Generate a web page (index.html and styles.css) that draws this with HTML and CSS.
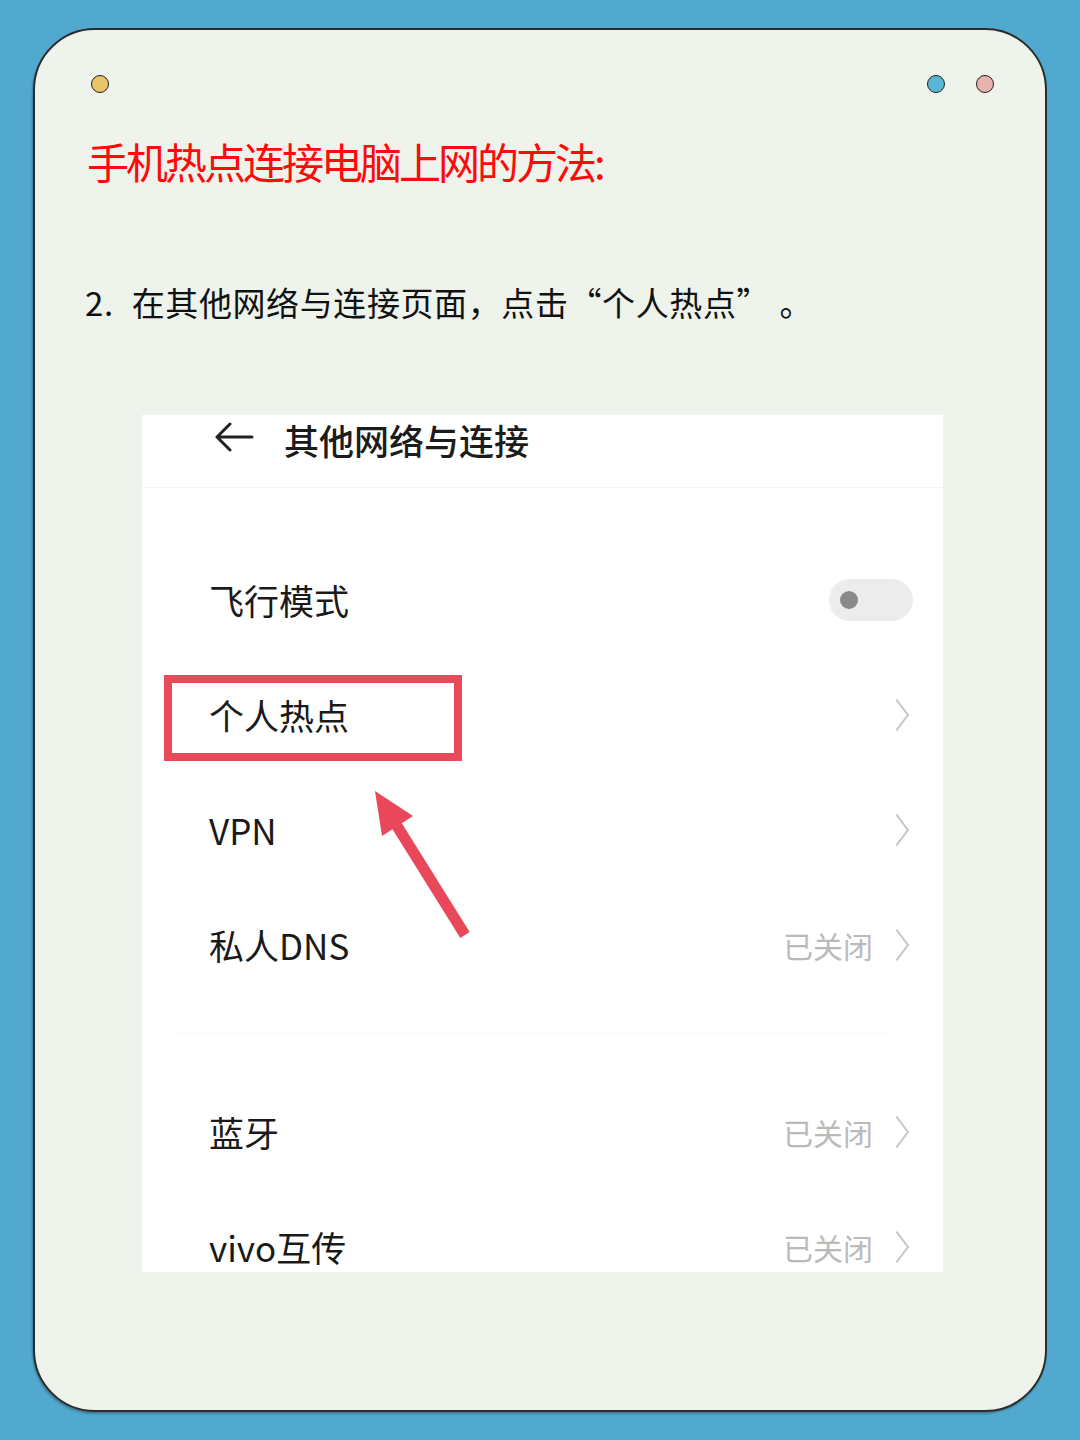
FILE: index.html
```html
<!DOCTYPE html>
<html>
	<head>
		<meta charset="utf-8">
		<title>手机热点连接电脑上网的方法</title>
		<link rel="stylesheet" href="styles.css">
	</head>
	<body>
		<div class="card">
			<div class="dots">
				<span class="dot yellow"></span>
				<span class="dots-right">
					<span class="dot blue"></span>
					<span class="dot pink"></span>
				</span>
			</div>
			<h1 class="title">手机热点连接电脑上网的方法:</h1>
			<p class="step"><span class="num">2.</span>在其他网络与连接页面，点击“个人热点”<span class="end">。</span></p>

			<div class="shot">
				<div class="shot-head">
					<svg class="back" width="40" height="30" viewBox="0 0 40 30">
						<path d="M38 15H3M16 2L3 15l13 13" fill="none" stroke="#222" stroke-width="3" stroke-linecap="round" stroke-linejoin="round"/>
					</svg>
					<span class="shot-title">其他网络与连接</span>
				</div>
				<div class="rows">
					<div class="row">
						<span class="label">飞行模式</span>
						<span class="switch"><i></i></span>
					</div>
					<div class="row">
						<span class="label">个人热点</span>
						<span class="chev"></span>
					</div>
					<div class="row">
						<span class="label">VPN</span>
						<span class="chev"></span>
					</div>
					<div class="row">
						<span class="label">私人DNS</span>
						<span class="right"><span class="state">已关闭</span><span class="chev"></span></span>
					</div>
				</div>
				<div class="sep"></div>
				<div class="rows">
					<div class="row">
						<span class="label">蓝牙</span>
						<span class="right"><span class="state">已关闭</span><span class="chev"></span></span>
					</div>
					<div class="row">
						<span class="label">vivo互传</span>
						<span class="right"><span class="state">已关闭</span><span class="chev"></span></span>
					</div>
				</div>

				<!-- 标注 -->
				<div class="mark"></div>
				<svg class="pointer" width="110" height="160" viewBox="0 0 110 160">
					<path d="M27 38L95 147" stroke="#e9475a" stroke-width="11" stroke-linecap="butt"/>
					<polygon points="5,3 12,48 43,28" fill="#e9475a"/>
				</svg>
			</div>
		</div>
	</body>
</html>
```

FILE: styles.css
```css
* {
	margin: 0;
	padding: 0;
	box-sizing: border-box;
}
body {
	background: #52a9cf;
	padding: 28px 33px;
	font-family: "Noto Sans CJK SC", "Noto Sans", sans-serif;
}
.card {
	width: 1014px;
	height: 1384px;
	background: #eef3ec;
	border: 2px solid #2c2c2c;
	border-radius: 62px;
	padding: 45px 51px 0 56px;
	box-shadow: -1px 2px 2px rgba(0,0,0,0.25);
}
.dots {
	display: flex;
	justify-content: space-between;
	align-items: center;
	height: 18px;
}
.dots-right {
	display: flex;
	gap: 31px;
}
.dot {
	display: block;
	width: 18px;
	height: 18px;
	border-radius: 50%;
	border: 1.5px solid #222;
}
.yellow { background: #e8c566; }
.blue { background: #5bb5d6; }
.pink { background: #e8b1ad; }

.title {
	margin-top: 43px;
	margin-left: -4px;
	font-size: 42px;
	font-weight: 400;
	line-height: 50px;
	color: #ff0a0a;
	letter-spacing: -3px;
}
.step {
	margin-top: 96px;
	margin-left: -6px;
	font-size: 33px;
	line-height: 40px;
	color: #111;
	letter-spacing: 0.6px;
}
.step .num {
	margin-right: 18px;
}
.step .end {
	margin-left: 26px;
}

.shot {
	position: relative;
	margin-top: 93px;
	margin-left: 51px;
	width: 801px;
	height: 857px;
	background: #fff;
	overflow: hidden;
}
.shot-head {
	height: 73px;
	display: flex;
	align-items: flex-start;
	padding: 5px 0 0 72px;
	border-bottom: 1px solid #f4f4f4;
}
.back {
	margin-top: 2px;
}
.shot-title {
	margin-left: 30px;
	font-size: 35px;
	font-weight: 500;
	line-height: 40px;
	color: #1c1c1c;
}
.rows {
	display: flex;
	flex-direction: column;
}
.shot-head + .rows {
	margin-top: 54px;
}
.row {
	height: 115px;
	display: flex;
	align-items: center;
	justify-content: space-between;
	padding: 0 30px 0 67px;
}
.label {
	font-size: 35px;
	color: #1a1a1a;
}
.right {
	display: flex;
	align-items: center;
}
.state {
	font-size: 30px;
	color: #bababa;
	margin-right: 14px;
}
.chev {
	display: block;
	width: 20px;
	height: 20px;
	border-top: 2px solid #c6c6c6;
	border-right: 2px solid #c6c6c6;
	transform: rotate(45deg) skew(8deg, 8deg);
	margin-right: 6px;
}
.switch {
	display: flex;
	align-items: center;
	width: 84px;
	height: 42px;
	border-radius: 21px;
	background: #ececec;
	padding-left: 11px;
}
.switch i {
	display: block;
	width: 18px;
	height: 18px;
	border-radius: 50%;
	background: #8a8a8a;
}
.sep {
	margin: 31px 58px 40px 33px;
	height: 1px;
	background: #f7f7f7;
}

.mark {
	position: absolute;
	left: 22px;
	top: 260px;
	width: 298px;
	height: 86px;
	border: 8px solid #e84a5a;
}
.pointer {
	position: absolute;
	left: 228px;
	top: 373px;
}
```
